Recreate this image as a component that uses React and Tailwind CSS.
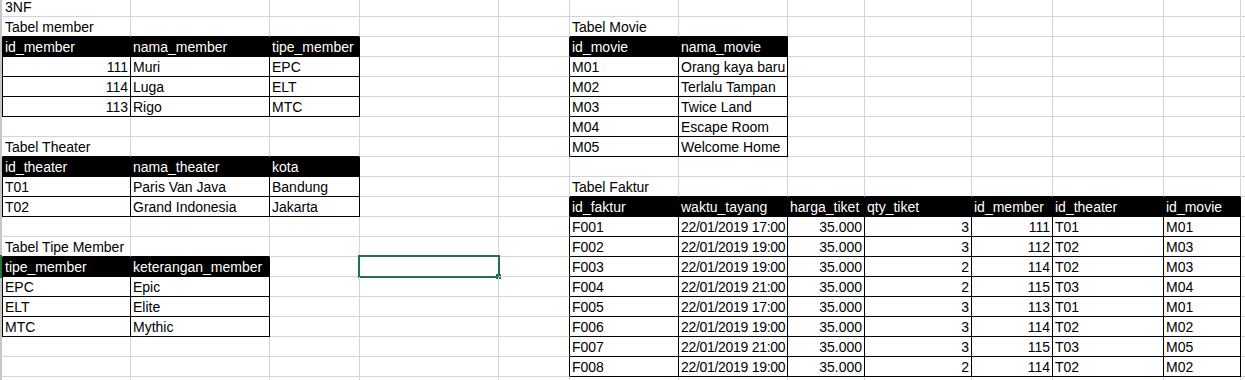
import React from 'react'

// column widths in px (A..L), M takes the rest
const COLS = [129, 139, 90, 139, 71, 109, 109, 77, 107, 81, 111, 77]
const NROWS = 20
const NCOLS = 13

const faktur = [
  ['F001', '22/01/2019 17:00', '35.000', '3', '111', 'T01', 'M01'],
  ['F002', '22/01/2019 19:00', '35.000', '3', '112', 'T02', 'M03'],
  ['F003', '22/01/2019 19:00', '35.000', '2', '114', 'T02', 'M03'],
  ['F004', '22/01/2019 21:00', '35.000', '2', '115', 'T03', 'M04'],
  ['F005', '22/01/2019 17:00', '35.000', '3', '113', 'T01', 'M01'],
  ['F006', '22/01/2019 19:00', '35.000', '3', '114', 'T02', 'M02'],
  ['F007', '22/01/2019 21:00', '35.000', '3', '115', 'T03', 'M05'],
  ['F008', '22/01/2019 19:00', '35.000', '2', '114', 'T02', 'M02'],
]

const tables = [
  {
    r: 3, c: 0,
    rows: [
      ['id_member', 'nama_member', 'tipe_member'],
      ['111', 'Muri', 'EPC'],
      ['114', 'Luga', 'ELT'],
      ['113', 'Rigo', 'MTC'],
    ],
  },
  {
    r: 3, c: 5,
    rows: [
      ['id_movie', 'nama_movie'],
      ['M01', 'Orang kaya baru'],
      ['M02', 'Terlalu Tampan'],
      ['M03', 'Twice Land'],
      ['M04', 'Escape Room'],
      ['M05', 'Welcome Home'],
    ],
  },
  {
    r: 9, c: 0,
    rows: [
      ['id_theater', 'nama_theater', 'kota'],
      ['T01', 'Paris Van Java', 'Bandung'],
      ['T02', 'Grand Indonesia', 'Jakarta'],
    ],
  },
  {
    r: 14, c: 0,
    rows: [
      ['tipe_member', 'keterangan_member'],
      ['EPC', 'Epic'],
      ['ELT', 'Elite'],
      ['MTC', 'Mythic'],
    ],
  },
  {
    r: 11, c: 5,
    rows: [
      ['id_faktur', 'waktu_tayang', 'harga_tiket', 'qty_tiket', 'id_member', 'id_theater', 'id_movie'],
      ...faktur,
    ],
  },
]

const titles = {
  '1,0': '3NF',
  '2,0': 'Tabel member',
  '2,5': 'Tabel Movie',
  '8,0': 'Tabel Theater',
  '10,5': 'Tabel Faktur',
  '13,0': 'Tabel Tipe Member',
}

// build a lookup of every bordered cell
const cells = {}
tables.forEach(t => {
  t.rows.forEach((row, i) => {
    row.forEach((text, j) => {
      cells[`${t.r + i},${t.c + j}`] = { text, header: i === 0 }
    })
  })
})

const bordered = (r, c) => !!cells[`${r},${c}`]

function Cell({ r, c }) {
  const cell = cells[`${r},${c}`]
  const title = titles[`${r},${c}`]
  const text = cell ? cell.text : title
  const right = cell && !cell.header && /^[0-9]/.test(cell.text)
  const isDate = text && text.includes('/')

  const rightBlack = bordered(r, c) || bordered(r, c + 1)
  const bottomBlack = bordered(r, c) || bordered(r + 1, c)

  return (
    <div
      className={clsx(
        'relative border-b px-[2px] whitespace-nowrap',
        r === 1 ? 'h-[17px] leading-[14px]' : 'h-[20px] leading-[20px]',
        c < NCOLS - 1 && 'border-r',
        rightBlack ? 'border-r-black' : 'border-r-[#d4d4d4]',
        bottomBlack ? 'border-b-black' : 'border-b-[#d4d4d4]',
        c === 0 && 'border-l',
        c === 0 && (bordered(r, 0) ? 'border-l-black' : 'border-l-white'),
        cell && cell.header && 'bg-black text-white',
        right && 'text-right',
        isDate && 'tracking-[-0.3px]'
      )}
    >
      {text}
      {r === 14 && c === 3 && (
        <>
          <div className="absolute -left-[2px] -top-[2px] w-[142px] h-[23px] border-2 border-[#217346]" />
          <div className="absolute left-[136px] top-[17px] w-[5px] h-[5px] bg-[#217346]" />
        </>
      )}
    </div>
  )
}

function clsx(...args) {
  return args.filter(Boolean).join(' ')
}

export default function App() {
  const rows = Array.from({ length: NROWS }, (_, i) => i + 1)
  const cols = Array.from({ length: NCOLS }, (_, i) => i)

  return (
    <div className="w-[1245px] h-[380px] overflow-hidden bg-white text-black flex font-['Liberation_Sans',Arial,sans-serif] text-[14px]">
      {/* sheet left edge, green where the active row is */}
      <div className="relative w-[2px] shrink-0 bg-[#c6c6c6]">
        <div className="absolute left-0 top-[255px] w-[2px] h-[23px] bg-[#217346]" />
      </div>
      <div className="grid grid-cols-[129px_139px_90px_139px_71px_109px_109px_77px_107px_81px_111px_77px_1fr] flex-1 content-start">
        {rows.map(r => cols.map(c => <Cell key={`${r}-${c}`} r={r} c={c} />))}
      </div>
    </div>
  )
}
